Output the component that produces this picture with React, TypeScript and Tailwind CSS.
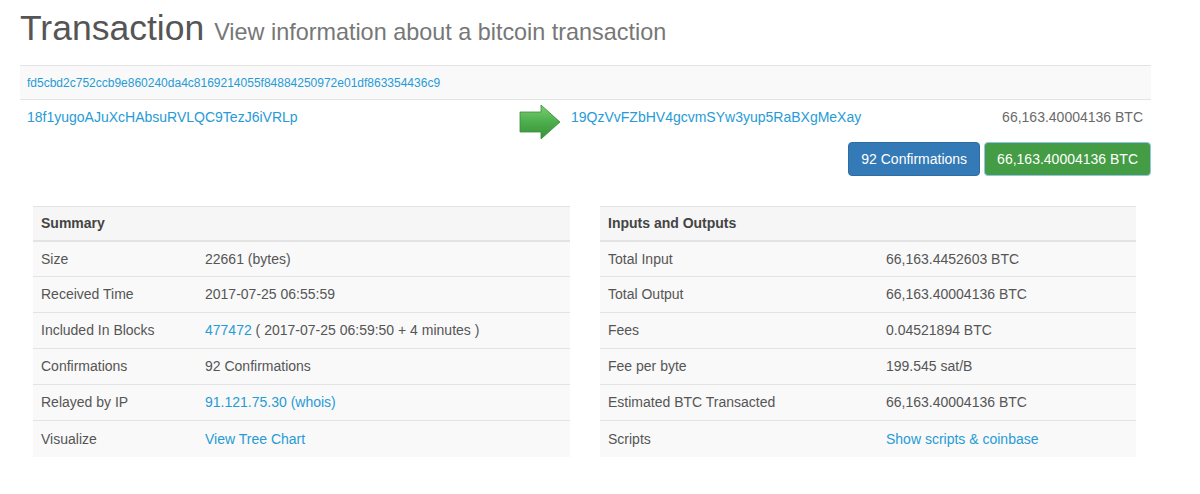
import React from 'react';

const font = { fontFamily: '"Liberation Sans", Arial, sans-serif' };

const link = 'text-[#279bd6]';

function Arrow() {
  return (
    <svg width="42" height="36" viewBox="0 0 42 36">
      <defs>
        <linearGradient id="arr" x1="0" y1="0" x2="0" y2="1">
          <stop offset="0" stopColor="#7dcf73" />
          <stop offset="0.5" stopColor="#4cae4c" />
          <stop offset="1" stopColor="#3a8f3a" />
        </linearGradient>
      </defs>
      <path d="M1 8 H22 V1 L41 18 L22 35 V28 H1 Z" fill="url(#arr)" stroke="#3c8a3c" strokeWidth="0.8" />
    </svg>
  );
}

type Row = { label: string; value: React.ReactNode };

function InfoTable({ title, rows, labelW }: { title: string; rows: Row[]; labelW: string }) {
  return (
    <div className="w-full text-[14px] text-[#555]">
      <div className="h-[36px] border-t border-b-2 border-[#e3e3e3] bg-[#f6f6f6] px-2 flex items-center font-bold text-[14px] text-[#444]">
        {title}
      </div>
      <div className="divide-y divide-[#e3e3e3] bg-[#f9f9f9]">
        {rows.map((r) => (
          <div key={r.label} className="h-[36px] first:h-[35px] flex items-center">
            <div className={`${labelW} px-2 shrink-0`}>{r.label}</div>
            <div className="px-2">{r.value}</div>
          </div>
        ))}
      </div>
    </div>
  );
}

export default function App() {
  const summary: Row[] = [
    { label: 'Size', value: '22661 (bytes)' },
    { label: 'Received Time', value: '2017-07-25 06:55:59' },
    {
      label: 'Included In Blocks',
      value: (
        <span>
          <span className={link}>477472</span> ( 2017-07-25 06:59:50 + 4 minutes )
        </span>
      ),
    },
    { label: 'Confirmations', value: '92 Confirmations' },
    { label: 'Relayed by IP', value: <span className={link}>91.121.75.30 (whois)</span> },
    { label: 'Visualize', value: <span className={link}>View Tree Chart</span> },
  ];

  const io: Row[] = [
    { label: 'Total Input', value: '66,163.4452603 BTC' },
    { label: 'Total Output', value: '66,163.40004136 BTC' },
    { label: 'Fees', value: '0.04521894 BTC' },
    { label: 'Fee per byte', value: '199.545 sat/B' },
    { label: 'Estimated BTC Transacted', value: '66,163.40004136 BTC' },
    { label: 'Scripts', value: <span className={link}>Show scripts &amp; coinbase</span> },
  ];

  return (
    <div className="w-[1200px] h-[494px] bg-white overflow-hidden" style={font}>
      <div className="pl-[20px] w-[1151px]">
        <h1 className="pt-[6px] h-[65px] flex items-baseline gap-[10px] text-[#555]">
          <span className="text-[35.5px] leading-[44px]">Transaction</span>
          <span className="text-[23.4px] text-[#777]">View information about a bitcoin transaction</span>
        </h1>

        <div className="border-t border-[#e3e3e3] bg-[#f9f9f9] h-[34px] flex items-center px-[7px] text-[12px]">
          <span className={link}>fd5cbd2c752ccb9e860240da4c8169214055f84884250972e01df863354436c9</span>
        </div>
        <div className="border-t border-[#e3e3e3] flex items-start h-[43px] text-[14px]">
          <div className="w-[499px] pl-[7px] pt-[8px] leading-[18px]">
            <span className={link}>18f1yugoAJuXcHAbsuRVLQC9TezJ6iVRLp</span>
          </div>
          <div className="pt-[4px]">
            <Arrow />
          </div>
          <div className="pl-[10px] pt-[8px] leading-[18px] flex-1">
            <span className={link}>19QzVvFZbHV4gcvmSYw3yup5RaBXgMeXay</span>
          </div>
          <div className="pr-[8px] pt-[8px] leading-[18px] text-[#6a6a6a]">66,163.40004136 BTC</div>
        </div>

        <div className="flex justify-end gap-[4px] text-[14px] text-white">
          <div className="h-[34px] px-[12px] flex items-center rounded-[4px] bg-[#337ab7] border border-[#2e6da4]">
            92 Confirmations
          </div>
          <div className="h-[34px] px-[12px] flex items-center rounded-[4px] bg-[#449d44] border border-[#8fc5e6]">
            66,163.40004136 BTC
          </div>
        </div>

        <div className="mt-[30px] ml-[13px] flex gap-[30px]">
          <div className="w-[537px]">
            <InfoTable title="Summary" rows={summary} labelW="w-[164px]" />
          </div>
          <div className="w-[536px]">
            <InfoTable title="Inputs and Outputs" rows={io} labelW="w-[278px]" />
          </div>
        </div>
      </div>
    </div>
  );
}
